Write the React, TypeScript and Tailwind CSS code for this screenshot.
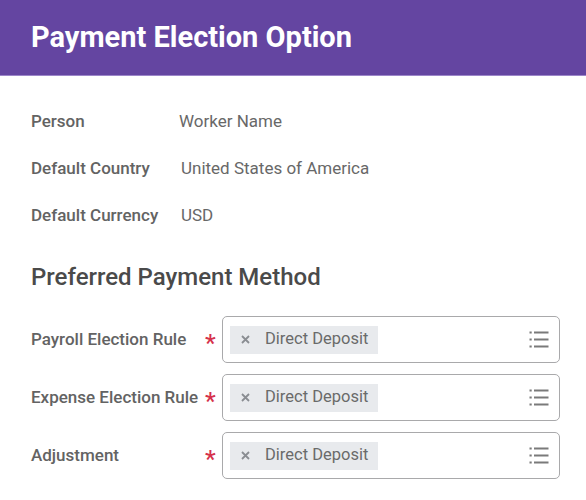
import React from "react";

function XIcon() {
  return (
    <svg width="9" height="9" viewBox="0 0 9 9" className="shrink-0">
      <path d="M1 1 L8 8 M8 1 L1 8" stroke="#8a8d92" strokeWidth="1.8" strokeLinecap="butt" />
    </svg>
  );
}

function ListIcon() {
  return (
    <svg width="20" height="17" viewBox="0 0 20 17" className="shrink-0">
      <rect x="0.5" y="0.5" width="2.2" height="2" fill="#7a7a7a" />
      <rect x="0.5" y="7.5" width="2.2" height="2" fill="#7a7a7a" />
      <rect x="0.5" y="14.5" width="2.2" height="2" fill="#7a7a7a" />
      <rect x="5" y="0.5" width="14.5" height="2" fill="#7a7a7a" />
      <rect x="5" y="7.5" width="14.5" height="2" fill="#7a7a7a" />
      <rect x="5" y="14.5" width="14.5" height="2" fill="#7a7a7a" />
    </svg>
  );
}

function InfoRow({ label, value, valueLeft }: { label: string; value: string; valueLeft: string }) {
  return (
    <div className="flex h-[47px] items-center">
      <div className={`${valueLeft} shrink-0 text-[17px] font-medium text-[#636363]`}>{label}</div>
      <div className="text-[17px] text-[#686868]">{value}</div>
    </div>
  );
}

function FormRow({ label }: { label: string }) {
  return (
    <div className="flex h-[47px] items-center">
      <div className="w-[174px] shrink-0 text-[17px] font-medium text-[#636363]">{label}</div>
      <div className="w-[17px] shrink-0 text-[24px] font-medium leading-none text-[#d6324a] pt-[7px]">*</div>
      <div className="flex h-[47px] flex-1 items-center justify-between rounded-[5px] border border-[#a9a9ab] pl-[7px] pr-[10px]">
        <div className="flex h-[28px] w-[148px] items-center gap-[15px] bg-[#e8eaed] pl-[11px]">
          <XIcon />
          <span className="text-[16.5px] text-[#6a6a6a]">Direct Deposit</span>
        </div>
        <ListIcon />
      </div>
    </div>
  );
}

export default function App() {
  return (
    <div className="h-[500px] w-[586px] overflow-hidden bg-white font-['Roboto',sans-serif]">
      <div className="flex h-[76px] items-center border-b border-[#9c86c9] bg-[#6445a1] px-[31px]">
        <h1 className="text-[29px] font-bold leading-none text-white">Payment Election Option</h1>
      </div>
      <div className="pl-[31px] pr-[26px] pt-[22px]">
        <InfoRow label="Person" value="Worker Name" valueLeft="w-[148px]" />
        <InfoRow label="Default Country" value="United States of America" valueLeft="w-[150px]" />
        <InfoRow label="Default Currency" value="USD" valueLeft="w-[150px]" />
        <h2 className="mt-[22px] text-[24px] font-medium leading-[32px] text-[#4a4a4a]">Preferred Payment Method</h2>
        <div className="mt-[23px] flex flex-col gap-[11px]">
          <FormRow label="Payroll Election Rule" />
          <FormRow label="Expense Election Rule" />
          <FormRow label="Adjustment" />
        </div>
      </div>
    </div>
  );
}
